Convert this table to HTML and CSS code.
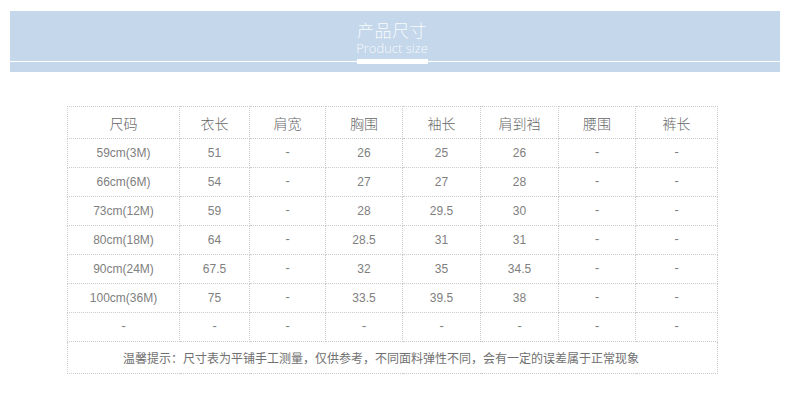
FILE: index.html
```html
<!DOCTYPE html>
<html lang="zh-CN">
<head>
<meta charset="utf-8">
<title>产品尺寸</title>
<link rel="stylesheet" href="styles.css">
</head>
<body>
<header class="banner">
  <div class="title">
    <div class="title-cn">产品尺寸</div>
    <div class="title-en">Product size</div>
  </div>
  <div class="rule">
    <span class="seg seg-left"></span>
    <span class="bar"></span>
    <span class="seg seg-right"></span>
  </div>
</header>
<main class="wrap">
  <table class="size-table">
    <colgroup>
      <col class="c1"><col class="c2"><col class="c3"><col class="c4"><col class="c5"><col class="c6"><col class="c7"><col class="c8">
    </colgroup>
    <thead>
      <tr class="head">
        <th>尺码</th><th>衣长</th><th>肩宽</th><th>胸围</th><th>袖长</th><th>肩到裆</th><th>腰围</th><th>裤长</th>
      </tr>
    </thead>
    <tbody>
      <tr><td>59cm(3M)</td><td>51</td><td class="dash">-</td><td>26</td><td>25</td><td>26</td><td class="dash">-</td><td class="dash">-</td></tr>
      <tr><td>66cm(6M)</td><td>54</td><td class="dash">-</td><td>27</td><td>27</td><td>28</td><td class="dash">-</td><td class="dash">-</td></tr>
      <tr><td>73cm(12M)</td><td>59</td><td class="dash">-</td><td>28</td><td>29.5</td><td>30</td><td class="dash">-</td><td class="dash">-</td></tr>
      <tr><td>80cm(18M)</td><td>64</td><td class="dash">-</td><td>28.5</td><td>31</td><td>31</td><td class="dash">-</td><td class="dash">-</td></tr>
      <tr><td>90cm(24M)</td><td>67.5</td><td class="dash">-</td><td>32</td><td>35</td><td>34.5</td><td class="dash">-</td><td class="dash">-</td></tr>
      <tr><td>100cm(36M)</td><td>75</td><td class="dash">-</td><td>33.5</td><td>39.5</td><td>38</td><td class="dash">-</td><td class="dash">-</td></tr>
      <tr><td class="dash">-</td><td class="dash">-</td><td class="dash">-</td><td class="dash">-</td><td class="dash">-</td><td class="dash">-</td><td class="dash">-</td><td class="dash">-</td></tr>
      <tr class="note"><td colspan="8">温馨提示：尺寸表为平铺手工测量，仅供参考，不同面料弹性不同，会有一定的误差属于正常现象</td></tr>
    </tbody>
  </table>
</main>
</body>
</html>
```
FILE: styles.css
```css
html, body {
  margin: 0;
  padding: 0;
  background: #ffffff;
}

body {
  font-family: "Noto Sans CJK SC", "Noto Sans", sans-serif;
}

.banner {
  margin: 11px 10px 0;
  height: 61px;
  box-sizing: border-box;
  padding-top: 10px;
  background: #c4d7eb;
  display: flex;
  flex-direction: column;
}

.title {
  display: flex;
  flex-direction: column;
  align-items: center;
  margin-right: 6px;
  color: rgba(255, 255, 255, 0.9);
}

.title-cn {
  font-family: "Noto Sans CJK SC", sans-serif;
  font-weight: 300;
  font-size: 17px;
  line-height: 17px;
  letter-spacing: 0.5px;
}

.title-en {
  margin-top: 4px;
  font-family: "Open Sans", "Noto Sans", sans-serif;
  font-weight: 300;
  font-size: 13px;
  line-height: 13px;
}

.rule {
  margin-top: 4px;
  height: 5px;
  display: flex;
  align-items: center;
}

.seg {
  height: 1px;
  background: #ffffff;
}

.seg-left {
  width: 347px;
}

.seg-right {
  flex: 1;
}

.bar {
  width: 71px;
  height: 5px;
  background: #ffffff;
}

.wrap {
  padding: 34px 0 0 67px;
}

.size-table {
  border-collapse: collapse;
  table-layout: fixed;
  width: 650px;
  color: #707070;
}

.c1 { width: 112px; }
.c2 { width: 70px; }
.c3 { width: 76px; }
.c4 { width: 77px; }
.c5 { width: 78px; }
.c6 { width: 78px; }
.c7 { width: 77px; }
.c8 { width: 82px; }

.size-table th,
.size-table td {
  border: 1px dotted #cccccc;
  padding: 0;
  text-align: center;
  vertical-align: middle;
}

.size-table th {
  height: 31px;
  font-weight: 300;
  font-size: 14px;
  color: #666666;
}

.size-table td {
  height: 28px;
  font-family: "Liberation Sans", "Noto Sans CJK SC", sans-serif;
  font-size: 12px;
  color: #808080;
}

.size-table td.dash {
  font-family: "Liberation Mono", monospace;
  font-size: 12px;
}

.size-table .note td {
  height: 31px;
  text-align: left;
  padding-left: 55px;
  font-family: "Noto Sans CJK SC", sans-serif;
  font-size: 12px;
  color: #707070;
}
```
